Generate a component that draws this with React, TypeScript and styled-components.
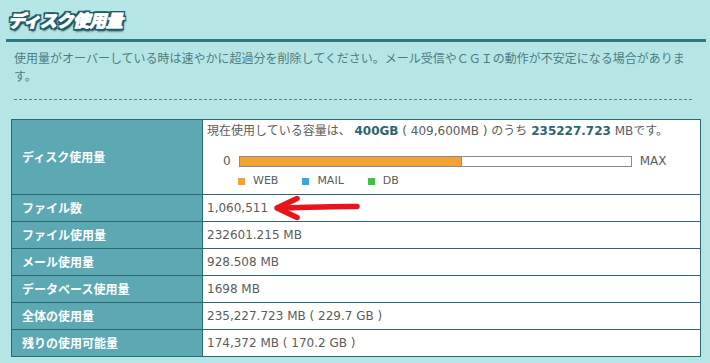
import React from "react";
import styled, { createGlobalStyle } from "styled-components";

const GlobalStyle = createGlobalStyle`
  html, body {
    margin: 0;
    padding: 0;
    background: #b6e5e5;
  }
  body {
    font-family: "DejaVu Sans", "Noto Sans CJK JP", sans-serif;
    color: #5a5a5a;
  }
`;

const Page = styled.div`
  width: 710px;
  height: 363px;
  overflow: hidden;
  background: #b6e5e5;
`;

const Header = styled.div`
  margin: 0 4px 0 6px;
  padding: 8px 0 7px 2px;
  border-bottom: 3px solid #2c7985;
`;

const Title = styled.h1`
  margin: 0;
  font-family: "Noto Sans CJK JP", sans-serif;
  font-size: 17px;
  line-height: 24px;
  font-weight: 900;
  font-style: italic;
  letter-spacing: -0.5px;
  color: #ffffff;
  -webkit-text-stroke: 0.8px #ffffff;
  text-shadow:
    -2px -2px 0 #1f5d68,
    2px -2px 0 #1f5d68,
    -2px 2px 0 #1f5d68,
    2px 2px 0 #1f5d68,
    0 -2px 0 #1f5d68,
    0 2px 0 #1f5d68,
    -2px 0 0 #1f5d68,
    2px 0 0 #1f5d68,
    1px 3px 2px #123f46;
`;

const Notice = styled.p`
  margin: 7px 18px 0 14px;
  padding-bottom: 14px;
  border-bottom: 1px dashed #54838a;
  width: 678px;
  font-family: "Noto Sans CJK JP", sans-serif;
  font-size: 12px;
  line-height: 18px;
  color: #4d7c83;
  box-sizing: content-box;
`;

const Table = styled.table`
  margin: 19px 0 0 11px;
  width: 690px;
  border-collapse: collapse;
  table-layout: fixed;
`;

const Th = styled.th`
  width: 180px;
  height: 26px;
  padding: 0 0 0 10px;
  background: #5ca9b4;
  border: 1px solid #2b6a74;
  color: #ffffff;
  text-align: left;
  font-family: "Noto Sans CJK JP", sans-serif;
  font-size: 12px;
  font-weight: 700;
  line-height: 14px;
`;

const Td = styled.td<{ $tall?: boolean }>`
  position: relative;
  height: ${(p) => (p.$tall ? "67px" : "26px")};
  padding: ${(p) => (p.$tall ? "2px 4px 5px" : "0 4px")};
  background: #ffffff;
  border: 1px solid #2b6a74;
  vertical-align: ${(p) => (p.$tall ? "top" : "middle")};
  font-size: 12px;
  line-height: 14px;
  color: #5c5c5c;
`;

const Line = styled.div`
  line-height: 18px;
  white-space: nowrap;
`;

const Strong = styled.b`
  color: #2e6670;
  font-weight: 700;
`;

const BarRow = styled.div`
  display: flex;
  align-items: center;
  gap: 8px;
  height: 18px;
  margin: 12px 0 0 16px;
`;

const Bar = styled.div`
  display: flex;
  width: 391px;
  height: 9px;
  border: 1px solid #8a8a8a;
  background: #ffffff;
`;

const Segment = styled.div<{ $color: string }>`
  height: 100%;
  background: ${(p) => p.$color};
`;

const Legend = styled.div`
  display: flex;
  align-items: center;
  margin: 4px 0 0 31px;
  height: 14px;
  font-size: 11px;
`;

const LegendItem = styled.span`
  display: flex;
  align-items: center;
  gap: 8px;
  margin-right: 24px;
`;

const Swatch = styled.span<{ $color: string }>`
  width: 7px;
  height: 7px;
  background: ${(p) => p.$color};
`;

const Arrow = styled.svg`
  position: absolute;
  left: 70px;
  top: 0;
`;

const legend = [
  { name: "WEB", color: "#f3a333" },
  { name: "MAIL", color: "#37a9d3" },
  { name: "DB", color: "#3ec43e" },
];

const rows = [
  { label: "ファイル使用量", value: "232601.215 MB" },
  { label: "メール使用量", value: "928.508 MB" },
  { label: "データベース使用量", value: "1698 MB" },
  { label: "全体の使用量", value: "235,227.723 MB ( 229.7 GB )" },
  { label: "残りの使用可能量", value: "174,372 MB ( 170.2 GB )" },
];

export default function App() {
  return (
    <Page>
      <GlobalStyle />
      <Header>
        <Title>ディスク使用量</Title>
      </Header>
      <Notice>
        使用量がオーバーしている時は速やかに超過分を削除してください。メール受信やＣＧＩの動作が不安定になる場合があります。
      </Notice>
      <Table>
        <tbody>
          <tr>
            <Th>ディスク使用量</Th>
            <Td $tall>
              <Line>
                現在使用している容量は、 <Strong>400GB</Strong> ( 409,600MB ) のうち{" "}
                <Strong>235227.723</Strong> MBです。
              </Line>
              <BarRow>
                <span>0</span>
                <Bar>
                  <Segment $color="#f3a333" style={{ width: `${(221 / 391) * 100}%` }} />
                  <Segment $color="#3ec43e" style={{ width: "1px" }} />
                </Bar>
                <span>MAX</span>
              </BarRow>
              <Legend>
                {legend.map((l) => (
                  <LegendItem key={l.name}>
                    <Swatch $color={l.color} />
                    {l.name}
                  </LegendItem>
                ))}
              </Legend>
            </Td>
          </tr>
          <tr>
            <Th>ファイル数</Th>
            <Td>
              1,060,511
              <Arrow width="88" height="26" viewBox="0 0 88 26">
                <path
                  d="M84 11.5 C 62 11, 34 12.5, 5 13"
                  stroke="#e8141c"
                  strokeWidth="5.5"
                  strokeLinecap="round"
                  fill="none"
                />
                <path
                  d="M24 3.5 L 4 13 L 24 22.5"
                  stroke="#e8141c"
                  strokeWidth="5.5"
                  strokeLinecap="round"
                  strokeLinejoin="round"
                  fill="none"
                />
              </Arrow>
            </Td>
          </tr>
          {rows.map((r) => (
            <tr key={r.label}>
              <Th>{r.label}</Th>
              <Td>{r.value}</Td>
            </tr>
          ))}
        </tbody>
      </Table>
    </Page>
  );
}
